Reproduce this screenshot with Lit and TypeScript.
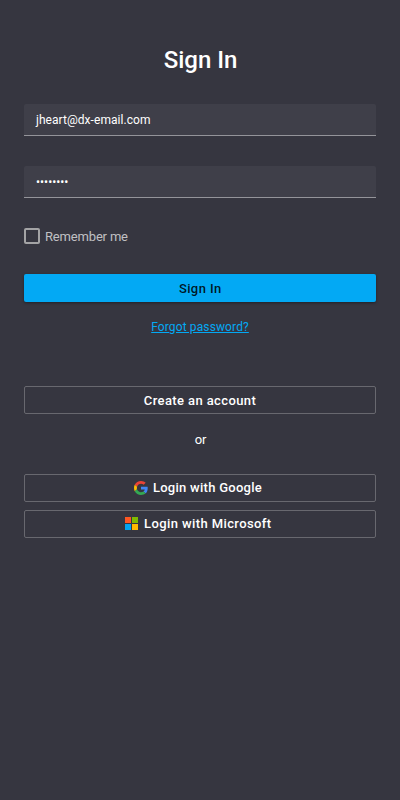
import { LitElement, html, css } from "lit";
import { customElement } from "lit/decorators.js";

@customElement("app-root")
export class AppRoot extends LitElement {
  static styles = css`
    :host {
      display: block;
      min-height: 800px;
      box-sizing: border-box;
      padding: 42px 24px 0;
      background: #363640;
      color: #fff;
      font: 13px/18px Roboto, "Noto Sans", sans-serif;
    }
    * { box-sizing: border-box; }
    .title {
      margin: 0;
      padding-left: 1px;
      text-align: center;
      font-size: 24px;
      line-height: 36px;
      font-weight: 500;
    }
    .field {
      height: 32px;
      padding: 0 12px;
      display: flex;
      align-items: center;
      background: #3f3f49;
      border-bottom: 1px solid #94949a;
      font-size: 12px;
      border-radius: 2px 2px 0 0;
    }
    .email { margin-top: 26px; letter-spacing: 0.05px; }
    .password { margin-top: 30px; }
    .remember {
      display: flex;
      align-items: center;
      gap: 5px;
      height: 18px;
      margin-top: 29px;
      color: #c0c0c3;
      letter-spacing: -0.17px;
    }
    .remember .text { padding-top: 2px; }
    .box {
      width: 16px;
      height: 16px;
      border: 2px solid #a3a3a5;
      border-radius: 2px;
    }
    .button {
      display: flex;
      align-items: center;
      justify-content: center;
      gap: 5px;
      width: 100%;
      height: 28px;
      padding: 0;
      border: 1px solid #68686f;
      border-radius: 2px;
      background: transparent;
      color: #fff;
      font: 500 13px/18px Roboto, "Noto Sans", sans-serif;
      letter-spacing: 0.4px;
    }
    .primary {
      margin-top: 29px;
      padding: 2px 0 0 0.5px;
      border: 0;
      background: #03a9f4;
      color: rgba(0, 0, 0, 0.87);
      box-shadow: 0 1px 3px rgba(0, 0, 0, 0.4);
    }
    .forgot {
      margin-top: 16px;
      text-align: center;
      font-size: 12px;
      color: #03a9f4;
      letter-spacing: 0.12px;
    }
    .forgot a { color: inherit; text-decoration: underline; }
    .create { margin-top: 50px; padding: 2px 0 0; }
    .or { margin: 17px 0 25px; padding-left: 1px; text-align: center; letter-spacing: -0.2px; }
    .google { padding-right: 4px; letter-spacing: 0.27px; }
    .microsoft { margin-top: 8px; padding-right: 3.5px; gap: 6px; letter-spacing: 0.4px; }
    svg { display: block; flex: none; }
    .microsoft svg { margin-bottom: 1px; }
  `;

  render() {
    return html`
      <h1 class="title">Sign In</h1>
      <div class="field email">jheart@dx-email.com</div>
      <div class="field password">••••••••</div>
      <div class="remember"><span class="box"></span><span class="text">Remember me</span></div>
      <button class="button primary">Sign In</button>
      <div class="forgot"><a>Forgot password?</a></div>
      <button class="button create">Create an account</button>
      <div class="or">or</div>
      <button class="button google">
        <svg width="14" height="14" viewBox="0 0 48 48">
          <path fill="#EA4335" d="M24 9.5c3.54 0 6.71 1.22 9.21 3.6l6.85-6.85C35.9 2.38 30.47 0 24 0 14.62 0 6.51 5.38 2.56 13.22l7.98 6.19C12.43 13.72 17.74 9.5 24 9.5z"/>
          <path fill="#4285F4" d="M46.98 24.55c0-1.57-.15-3.09-.38-4.55H24v9.02h12.94c-.58 2.96-2.26 5.48-4.78 7.18l7.73 6c4.51-4.18 7.09-10.36 7.09-17.65z"/>
          <path fill="#FBBC05" d="M10.53 28.59c-.48-1.45-.76-2.99-.76-4.59s.27-3.14.76-4.59l-7.98-6.19C.92 16.46 0 20.12 0 24c0 3.88.92 7.54 2.56 10.78l7.97-6.19z"/>
          <path fill="#34A853" d="M24 48c6.48 0 11.93-2.13 15.89-5.81l-7.73-6c-2.15 1.45-4.92 2.3-8.16 2.3-6.26 0-11.57-4.22-13.47-9.91l-7.98 6.19C6.51 42.62 14.62 48 24 48z"/>
        </svg>
        <span>Login with Google</span>
      </button>
      <button class="button microsoft">
        <svg width="13" height="13" viewBox="0 0 13 13" shape-rendering="crispEdges">
          <path fill="#ff5722" d="M0 0h6v6H0z"/>
          <path fill="#7fba00" d="M7 0h6v6H7z"/>
          <path fill="#03a4ef" d="M0 7h6v6H0z"/>
          <path fill="#ffb900" d="M7 7h6v6H7z"/>
        </svg>
        <span>Login with Microsoft</span>
      </button>
    `;
  }
}
